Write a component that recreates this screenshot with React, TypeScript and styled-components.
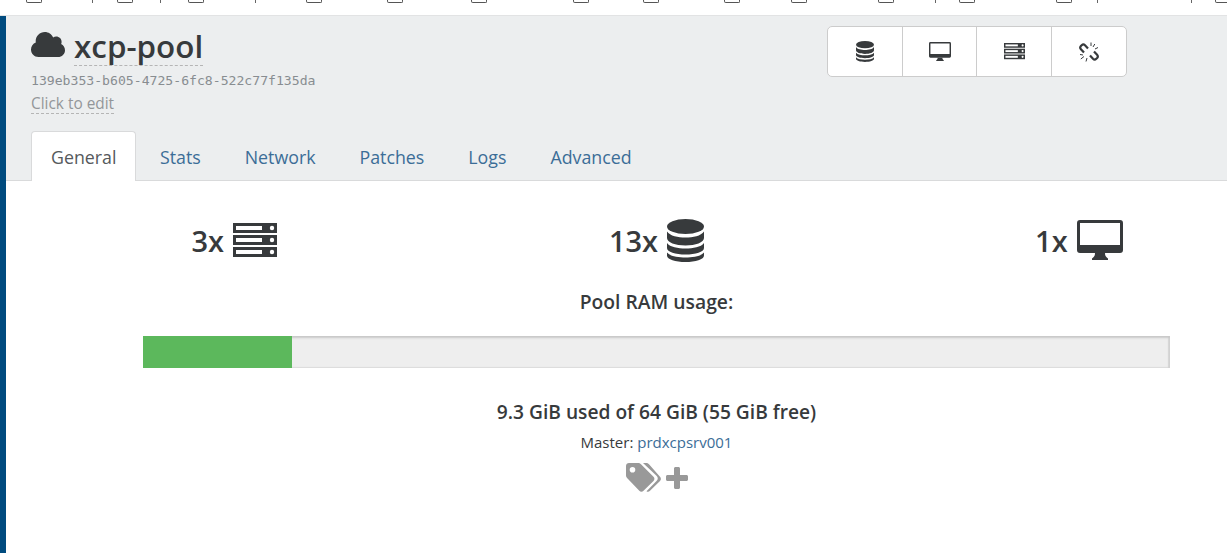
import styled, { createGlobalStyle } from "styled-components";

const GlobalStyle = createGlobalStyle`
  html, body {
    margin: 0;
    height: 553px;
    overflow: hidden;
    background: #fff;
    font-family: "Open Sans", "Noto Sans", sans-serif;
    color: #373a3c;
  }
`;

const INK = "#373a3c";

// what is left of the browser bookmarks bar, only the bottom edge shows
const BOOKMARKS: { x: number; mark?: boolean }[] = [
  { x: 26 }, { x: 92, mark: true }, { x: 117 }, { x: 160, mark: true }, { x: 188 },
  { x: 255, mark: true }, { x: 306 }, { x: 387 }, { x: 471 }, { x: 573 }, { x: 643 },
  { x: 724 }, { x: 791 }, { x: 878 }, { x: 935, mark: true }, { x: 959 }, { x: 1056 },
  { x: 1097, mark: true }, { x: 1191, mark: true }, { x: 1215 },
];

const TABS = ["General", "Stats", "Network", "Patches", "Logs", "Advanced"];

function ServerIcon({ size }: { size: number }) {
  return (
    <svg width={size} height={(size * 34) / 44} viewBox="0 0 44 34" fill={INK}>
      {[0, 12, 24].map((y) => (
        <g key={y}>
          <rect x="0" y={y} width="44" height="10" />
          <rect x="3" y={y + 3} width="26" height="4" fill="#fff" />
          <circle cx="39" cy={y + 5} r="2.2" fill="#fff" />
        </g>
      ))}
    </svg>
  );
}

function DatabaseIcon({ size }: { size: number }) {
  return (
    <svg width={size} height={(size * 43) / 37} viewBox="0 0 37 43" fill={INK}>
      <ellipse cx="18.5" cy="7.5" rx="18.5" ry="7.5" />
      <path d="M0 12.5C3 17 11 18.5 18.5 18.5S34 17 37 12.5V19C37 23.5 28.5 26.5 18.5 26.5S0 23.5 0 19Z" />
      <path d="M0 24C3 28.2 11 29.5 18.5 29.5S34 28.2 37 24V29C37 33 28.5 35.5 18.5 35.5S0 33 0 29Z" />
      <path d="M0 33.5C3 37.2 11 38.5 18.5 38.5S34 37.2 37 33.5V36.5C37 40.5 28.5 43 18.5 43S0 40.5 0 36.5Z" />
    </svg>
  );
}

function DesktopIcon({ size }: { size: number }) {
  return (
    <svg width={size} height={(size * 40) / 46} viewBox="0 0 46 40" fill={INK}>
      <path
        fillRule="evenodd"
        d="M3 0H43A3 3 0 0 1 46 3V30A3 3 0 0 1 43 33H3A3 3 0 0 1 0 30V3A3 3 0 0 1 3 0ZM3 3V25H43V3Z"
      />
      <path d="M18 33H28C28 36 29 37 31 38.500V40H15V38.500C17 37 18 36 18 33Z" />
    </svg>
  );
}

function UnlinkIcon() {
  return (
    <svg width="20" height="20" viewBox="0 0 20 20" fill="none" stroke={INK}>
      <path strokeWidth="2.2" d="M9 6.500L6 3.200C5 2.200 3.700 2.200 2.700 3.200L1.900 4C1 5 1 6.200 1.900 7.200L5 10.500" />
      <path strokeWidth="2.2" d="M11 13.500L14 16.800C15 17.800 16.300 17.800 17.300 16.800L18.100 16C19 15 19 13.800 18.100 12.800L15 9.500" />
      <path strokeWidth="1" d="M12 .5V4M15.800 2L14 5M19 5.500L16 7M1 12.500L4 13M1.800 17L5 14.500M7 19.500L8 16" />
    </svg>
  );
}

function CloudIcon() {
  return (
    <CloudShape width="34" height="25" viewBox="0 0 34 25" fill={INK}>
      <path d="M7.500 25C3.300 25 0 21.700 0 17.500C0 14.300 2 11.600 4.800 10.500C4.700 10 4.700 9.600 4.700 9C4.700 4 8.800 0 13.800 0C17.500 0 20.700 2.200 22.100 5.400C23 4.800 24 4.500 25.200 4.500C28.200 4.500 30.600 6.900 30.600 9.900C30.600 10.700 30.400 11.400 30.100 12C32.400 13.200 34 15.500 34 18.200C34 22 30.900 25 27.100 25Z" />
    </CloudShape>
  );
}

function TagsIcon() {
  return (
    <svg width="35" height="29" viewBox="0 0 35 29" fill="#999">
      <path
        fillRule="evenodd"
        d="M3 0H12C13.200 0 14.200 .5 15 1.300L27.500 13.800C28.700 15 28.700 16.800 27.500 18L17.500 27.800C16.300 29 14.500 29 13.300 27.800L1.300 15.300C.5 14.500 0 13.500 0 12.300V3C0 1.300 1.300 0 3 0ZM6.500 4A2.800 2.800 0 1 0 6.500 9.600A2.800 2.800 0 1 0 6.500 4Z"
      />
      <path d="M17 0H20C21.200 0 22.200 .5 23 1.300L34 13.800C35.200 15 35.200 16.800 34 18L24 27.800C22.800 29 21.500 29 20.500 28.200L30.500 18C32.200 16.300 32.200 14.500 30.500 12.800Z" />
    </svg>
  );
}

function PlusIcon() {
  return (
    <svg width="22" height="22" viewBox="0 0 22 22" fill="#999">
      <path d="M8 1.500C8 .7 8.700 0 9.500 0H12.500C13.300 0 14 .7 14 1.500V8H20.500C21.300 8 22 8.700 22 9.500V12.500C22 13.300 21.300 14 20.500 14H14V20.500C14 21.300 13.300 22 12.500 22H9.500C8.700 22 8 21.300 8 20.500V14H1.500C.7 14 0 13.300 0 12.500V9.500C0 8.700 .7 8 1.500 8H8Z" />
    </svg>
  );
}

export default function App() {
  return (
    <>
      <GlobalStyle />
      <Bookmarks>
        {BOOKMARKS.map((b, i) => {
          const prev = BOOKMARKS[i - 1];
          const left = prev ? b.x - prev.x - (prev.mark ? 1 : 16) : b.x;
          return b.mark ? <Descender key={b.x} $left={left} /> : <CheckBottom key={b.x} $left={left} />;
        })}
      </Bookmarks>
      <Shell>
        <Rail />
        <Page>
          <Header>
            <HeaderTop>
              <Identity>
                <TitleRow>
                  <CloudIcon />
                  <Title>xcp-pool</Title>
                </TitleRow>
                <Uuid>139eb353-b605-4725-6fc8-522c77f135da</Uuid>
                <ClickToEdit>Click to edit</ClickToEdit>
              </Identity>
              <ButtonGroup>
                <GroupButton><DatabaseIcon size={18} /></GroupButton>
                <GroupButton><DesktopIcon size={22} /></GroupButton>
                <GroupButton><ServerIcon size={21} /></GroupButton>
                <GroupButton><UnlinkIcon /></GroupButton>
              </ButtonGroup>
            </HeaderTop>
            <Tabs>
              {TABS.map((tab, i) => (
                <Tab key={tab} $active={i === 0}>{tab}</Tab>
              ))}
            </Tabs>
          </Header>
          <Content>
            <Counts>
              <Count>3x <ServerIcon size={44} /></Count>
              <Count>13x <DatabaseIcon size={37} /></Count>
              <Count>1x <DesktopIcon size={46} /></Count>
            </Counts>
            <UsageLabel>Pool RAM usage:</UsageLabel>
            <Track>
              <Fill style={{ width: `${(9.3 / 64) * 100}%` }} />
            </Track>
            <UsageText>9.3 GiB used of 64 GiB (55 GiB free)</UsageText>
            <Master>Master: <MasterLink>prdxcpsrv001</MasterLink></Master>
            <TagLine>
              <TagsIcon />
              <PlusIcon />
            </TagLine>
          </Content>
        </Page>
      </Shell>
    </>
  );
}

const Bookmarks = styled.div`
  height: 15px;
  display: flex;
  align-items: flex-start;
  background: #fff;
  border-bottom: 1px solid #e2e3e4;
  overflow: hidden;
`;

const CheckBottom = styled.span<{ $left: number }>`
  flex: none;
  box-sizing: border-box;
  width: 16px;
  height: 3px;
  margin-left: ${(p) => p.$left}px;
  border: 1px solid #555;
  border-top: none;
  border-radius: 0 0 2px 2px;
`;

const Descender = styled.span<{ $left: number }>`
  flex: none;
  width: 1px;
  height: 3px;
  margin-left: ${(p) => p.$left}px;
  background: #666;
`;

const Shell = styled.div`
  display: flex;
  height: 537px;
`;

const Rail = styled.div`
  flex: none;
  width: 6px;
  background: #004b7f;
`;

const Page = styled.div`
  flex: 1;
  min-width: 0;
  overflow: hidden;
`;

const Header = styled.div`
  height: 165px;
  box-sizing: border-box;
  display: flex;
  flex-direction: column;
  justify-content: space-between;
  background: #eceeef;
  border-bottom: 1px solid #d9dadb;
`;

const HeaderTop = styled.div`
  display: flex;
  justify-content: space-between;
  padding: 10px 100px 0 25px;
`;

const Identity = styled.div`
  display: flex;
  flex-direction: column;
  align-items: flex-start;
`;

const TitleRow = styled.div`
  display: flex;
  align-items: center;
  gap: 9px;
  height: 40px;
`;

const CloudShape = styled.svg`
  margin-bottom: 3px;
`;

const Title = styled.span`
  font-size: 31.4px;
  font-weight: 600;
  line-height: 39px;
  border-bottom: 1px dashed #b5b5b5;
`;

const Uuid = styled.div`
  margin-top: 5px;
  font-family: "DejaVu Sans Mono", monospace;
  font-size: 13.13px;
  line-height: 20px;
  color: #888d91;
`;

const ClickToEdit = styled.div`
  margin-top: 3px;
  font-size: 15.4px;
  line-height: 19px;
  color: #939699;
  border-bottom: 1px dashed #b5b5b5;
`;

const ButtonGroup = styled.div`
  display: flex;
  height: 51px;
  box-sizing: border-box;
  background: #fff;
  border: 1px solid #ccc;
  border-radius: 5px;
`;

const GroupButton = styled.div`
  width: 75px;
  display: flex;
  align-items: center;
  justify-content: center;
  border-left: 1px solid #ccc;
  box-sizing: border-box;
  &:nth-child(-n + 2) {
    width: 74px;
  }
  &:first-child {
    border-left: none;
  }
`;

const Tabs = styled.div`
  display: flex;
  align-items: flex-end;
  padding-left: 25px;
  margin-bottom: -1px;
`;

const Tab = styled.div<{ $active?: boolean }>`
  height: 50px;
  box-sizing: border-box;
  padding: 0 ${(p) => (p.$active ? 19 : 21)}px;
  margin-right: ${(p) => (p.$active ? 1.5 : 0)}px;
  display: flex;
  align-items: center;
  font-size: 17.8px;
  color: ${(p) => (p.$active ? "#55595c" : "#3b6d97")};
  background: ${(p) => (p.$active ? "#fff" : "transparent")};
  border: 1px solid ${(p) => (p.$active ? "#d9dadb" : "transparent")};
  border-bottom: none;
  border-radius: 4px 4px 0 0;
`;

const Content = styled.div`
  width: 1267px;
  margin-left: 17px;
  display: flex;
  flex-direction: column;
  align-items: center;
`;

const Counts = styled.div`
  align-self: stretch;
  display: grid;
  grid-template-columns: repeat(3, 1fr);
  padding-top: 37px;
`;

const Count = styled.div`
  display: flex;
  align-items: center;
  justify-content: center;
  gap: 9px;
  height: 44px;
  font-size: 29px;
  font-weight: 600;
`;

const UsageLabel = styled.div`
  margin-top: 28px;
  font-size: 19.3px;
  font-weight: 600;
  line-height: 24px;
`;

const Track = styled.div`
  width: 1027px;
  height: 32px;
  box-sizing: border-box;
  margin-top: 22px;
  background: #eee;
  box-shadow: inset 0 2px 2px #c9c9c9, inset -2px 0 1px #d5d5d5, inset 0 -1px 1px #dcdcdc;
`;

const Fill = styled.div`
  height: 100%;
  background: #5cb85c;
`;

const UsageText = styled.div`
  margin-top: 32px;
  font-size: 19.2px;
  font-weight: 600;
  line-height: 24px;
`;

const Master = styled.div`
  margin-top: 8px;
  font-size: 15px;
  line-height: 20px;
`;

const MasterLink = styled.span`
  color: #3b6d97;
`;

const TagLine = styled.div`
  display: flex;
  align-items: center;
  gap: 5px;
  margin-top: 11px;
`;
